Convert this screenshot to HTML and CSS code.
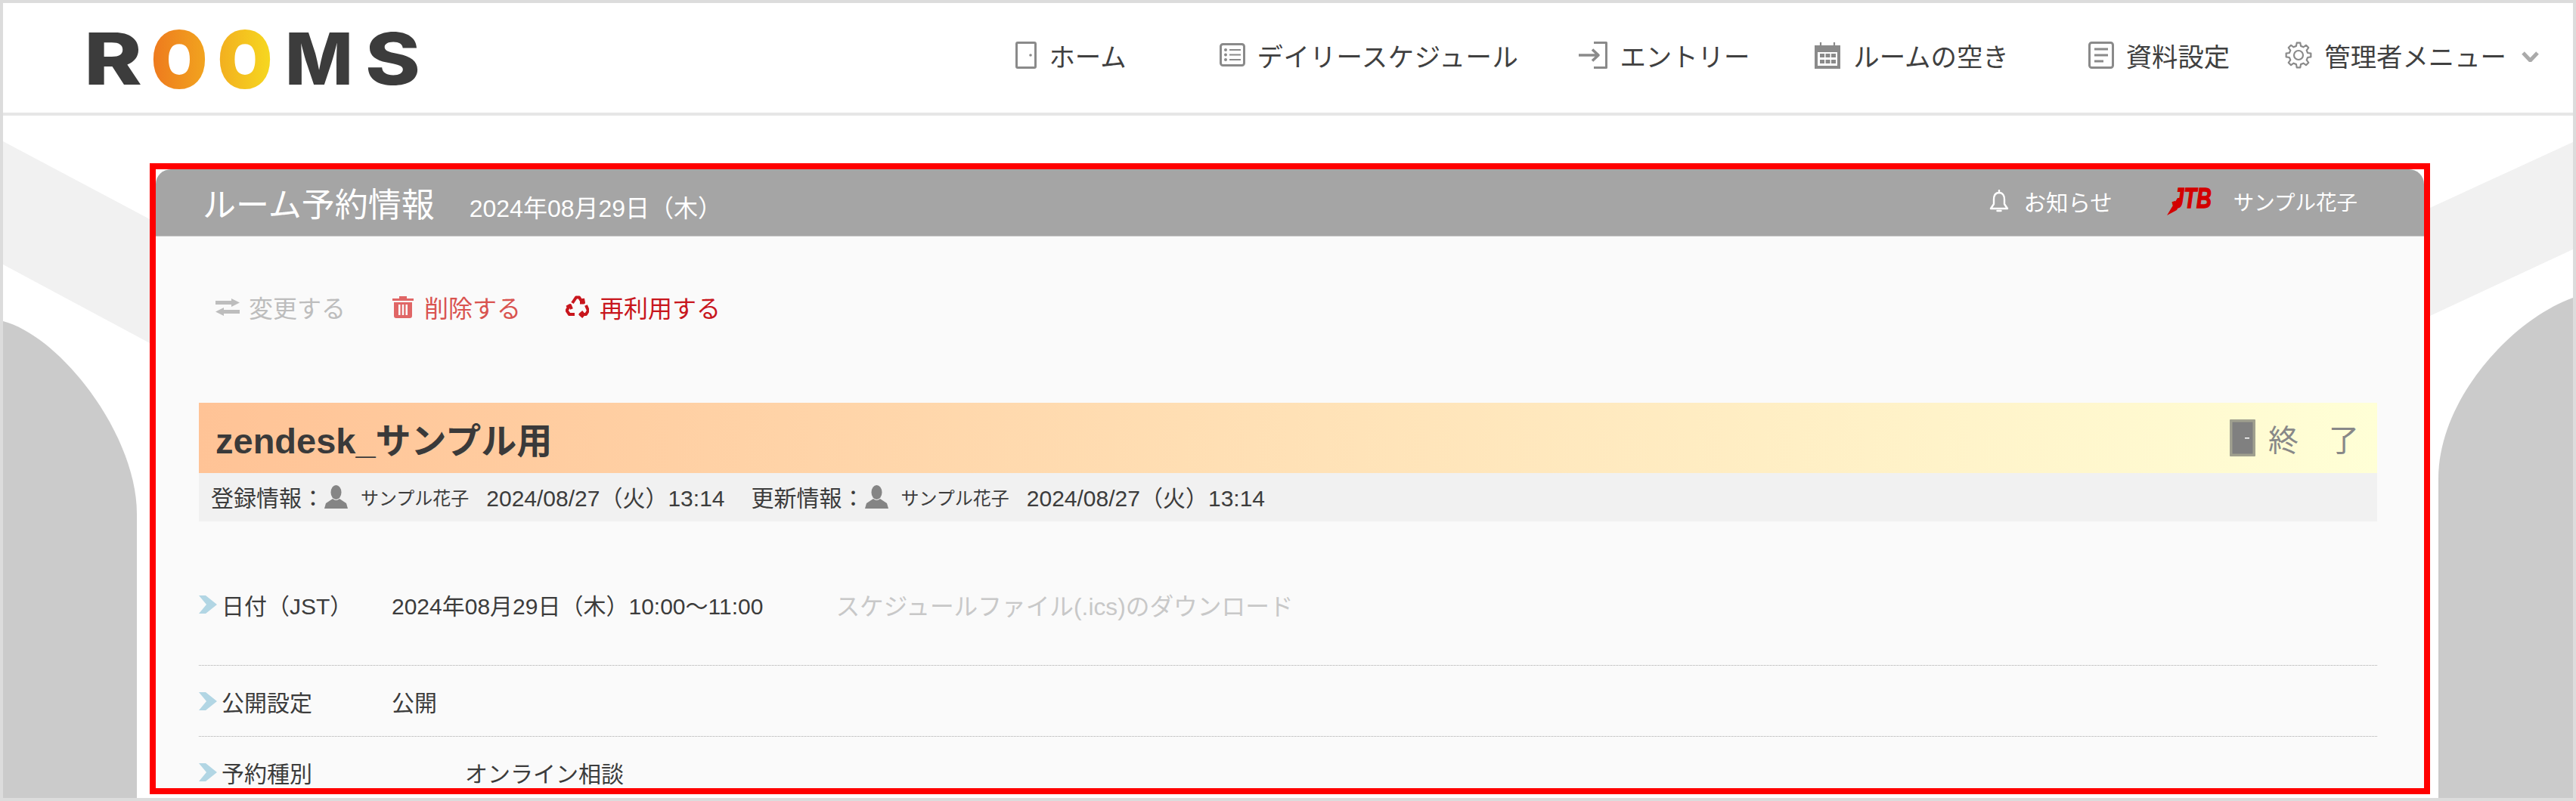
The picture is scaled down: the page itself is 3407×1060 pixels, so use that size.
FILE: index.html
```html
<!DOCTYPE html>
<html lang="ja">
<head>
<meta charset="utf-8">
<title>ルーム予約情報</title>
<link rel="stylesheet" href="styles.css">
</head>
<body>
<div class="frame">
  <svg class="backdrop" width="3399" height="1052" viewBox="4 4 3399 1052" aria-hidden="true">
    <polygon class="band" points="4,187 198,290 198,454 4,350"/>
    <polygon class="band" points="3403,188 3214,275 3214,418 3403,330"/>
    <path class="hill" d="M4 425 C80 445 181 575 181 680 V1056 H4 Z"/>
    <path class="hill" d="M3403 394 C3320 424 3225 530 3225 633 V1056 H3403 Z"/>
  </svg>

  <header class="site-header">
    <svg class="logo" width="443" height="130" viewBox="0 -26 443 130" role="img" aria-label="ROOMS">
      <defs>
        <linearGradient id="logoGrad" gradientUnits="userSpaceOnUse" x1="90" y1="0" x2="246" y2="0">
          <stop offset="0" stop-color="#ee7a1e"/>
          <stop offset="1" stop-color="#f6d820"/>
        </linearGradient>
      </defs>
      <text class="logo-text" x="-1" y="72" textLength="77" lengthAdjust="spacingAndGlyphs">R</text>
      <text class="logo-text logo-o" x="89" y="75" textLength="72" lengthAdjust="spacingAndGlyphs">O</text>
      <text class="logo-text logo-o" x="177" y="75" textLength="70" lengthAdjust="spacingAndGlyphs">O</text>
      <text class="logo-text" x="265" y="72" textLength="90" lengthAdjust="spacingAndGlyphs">M</text>
      <text class="logo-text" x="371" y="72" textLength="73" lengthAdjust="spacingAndGlyphs">S</text>
    </svg>
    <nav class="nav">
      <a class="nav-item nav-home">
        <svg width="28" height="36" viewBox="0 0 28 36"><rect class="ico" x="1.5" y="1.5" width="25" height="33" rx="1.5"/><circle class="ico-fill" cx="20" cy="18" r="1.8"/></svg>
        <span>ホーム</span>
      </a>
      <a class="nav-item nav-daily">
        <svg width="34" height="31" viewBox="0 0 34 31"><rect class="ico" x="1.5" y="1.5" width="31" height="28" rx="3"/><path class="ico ico-thin" d="M13 9H28M13 15.500H28M13 22H28"/><circle class="ico-fill" cx="8" cy="9" r="2"/><circle class="ico-fill" cx="8" cy="15.500" r="2"/><circle class="ico-fill" cx="8" cy="22" r="2"/></svg>
        <span>デイリースケジュール</span>
      </a>
      <a class="nav-item nav-entry">
        <svg width="38" height="36" viewBox="0 0 38 36"><path class="ico" d="M20 1.500H36.500V34.500H20"/><path class="ico ico-bold" d="M0 18H25M18 10.500L26 18L18 25.500"/></svg>
        <span>エントリー</span>
      </a>
      <a class="nav-item nav-room">
        <svg width="36" height="36" viewBox="0 0 36 36"><path class="ico-fill" d="M1 5H35V36H1ZM5 14V32H31V14Z"/><path class="ico ico-thin" d="M9 1V8M27 1V8"/><path class="ico-fill" d="M8 16H14V21H8ZM15.500 16H21.500V21H15.500ZM23 16H29V21H23ZM8 24H14V29H8ZM15.500 24H21.500V29H15.500ZM23 24H29V29H23Z"/></svg>
        <span>ルームの空き</span>
      </a>
      <a class="nav-item nav-docs">
        <svg width="34" height="36" viewBox="0 0 34 36"><rect class="ico" x="1.500" y="1.500" width="31" height="33" rx="3"/><path class="ico" d="M8 10H26M8 18H26M8 26H20"/></svg>
        <span>資料設定</span>
      </a>
      <a class="nav-item nav-admin">
        <svg width="36" height="36" viewBox="0 0 36 36"><polygon class="ico ico-thin" points="15.7,1.66 20.3,1.66 21.03,5.87 24.44,7.29 27.93,4.82 31.18,8.07 28.71,11.56 30.13,14.97 34.34,15.7 34.34,20.3 30.13,21.03 28.71,24.44 31.18,27.93 27.93,31.18 24.44,28.71 21.03,30.13 20.3,34.34 15.7,34.34 14.97,30.13 11.56,28.71 8.07,31.18 4.82,27.93 7.29,24.44 5.87,21.03 1.66,20.3 1.66,15.7 5.87,14.97 7.29,11.56 4.82,8.07 8.07,4.82 11.56,7.29 14.97,5.87"/><circle class="ico ico-thin" cx="18" cy="18" r="6"/></svg>
        <span>管理者メニュー</span>
        <svg class="caret" width="23" height="14" viewBox="0 0 23 14"><path d="M2 2L11.500 12L21 2"/></svg>
      </a>
    </nav>
  </header>

  <main class="stage">
    <section class="highlight">
      <div class="panel-head">
        <div class="head-left">
          <h1 class="panel-title">ルーム予約情報</h1>
          <span class="panel-date">2024年08月29日（木）</span>
        </div>
        <div class="head-right">
          <a class="head-link">
            <svg width="26" height="31" viewBox="0 0 26 31"><path class="ico-white" d="M13 4C8 4 6 8 6 13V19L2 25H24L20 19V13C20 8 18 4 13 4Z"/><path class="ico-white" d="M13 1V4M10.500 28H15.500"/></svg>
            <span class="head-notice">お知らせ</span>
          </a>
          <span class="head-user">
            <svg class="jtb" width="84" height="53" viewBox="0 -8 84 53" role="img" aria-label="JTB"><path class="jtb-tail" d="M14 14L21 14L13 30L0 37L6 27Z"/><text class="jtb-text" x="7" y="27" textLength="52" lengthAdjust="spacingAndGlyphs">JTB</text></svg>
            <span>サンプル花子</span>
          </span>
        </div>
      </div>

      <div class="panel-body">
        <div class="actions">
          <a class="action action-off">
            <svg width="32" height="23" viewBox="0 0 32 23"><path class="swap" d="M0 3H21V0L32 5.500L21 11V8H0ZM32 15H11V12L0 17.500L11 23V20H32Z"/></svg>
            <span>変更する</span>
          </a>
          <a class="action action-delete">
            <svg width="28" height="30" viewBox="0 0 28 30"><path class="trash" d="M0 4H9V1H19V4H28V7H0ZM2 9H26V27Q26 30 23 30H5Q2 30 2 27ZM8 12V26H10.500V12ZM12.800 12V26H15.200V12ZM17.500 12V26H20V12Z"/></svg>
            <span>削除する</span>
          </a>
          <a class="action action-reuse">
            <svg width="31" height="30" viewBox="0 0 31 30"><g class="recycle"><path d="M9 10L14 2.500H18L22 9"/><path d="M19 9.500H24L23 4"/><path d="M27 13L30 20L27 25H20"/><path d="M23.500 21.500L19.500 25L23.500 28.500"/><path d="M12 25H5L1.500 20L5 14"/><path d="M1.500 15.500L6 13L8 18"/></g></svg>
            <span>再利用する</span>
          </a>
        </div>

        <div class="banner">
          <h2 class="banner-title">zendesk_サンプル用</h2>
          <div class="banner-status">
            <svg width="34" height="49" viewBox="0 0 34 49"><rect class="door-out" width="34" height="49" rx="1"/><rect class="door-in" x="3.500" y="3.500" width="27" height="42"/><rect class="door-knob" x="20" y="24" width="6" height="1.500"/></svg>
            <span>終　了</span>
          </div>
        </div>

        <div class="meta">
          <span class="meta-label">登録情報：</span>
          <svg class="person" width="31" height="31" viewBox="0 0 31 31"><ellipse class="person-fill" cx="15.500" cy="9.500" rx="7" ry="9.500"/><path class="person-fill" d="M11 18Q15.500 22 20 18L29 24L31 31H0L2 24Z"/></svg>
          <span class="meta-name">サンプル花子</span>
          <span class="meta-date">2024/08/27（火）13:14</span>
          <span class="meta-label meta-second">更新情報：</span>
          <svg class="person" width="31" height="31" viewBox="0 0 31 31"><ellipse class="person-fill" cx="15.500" cy="9.500" rx="7" ry="9.500"/><path class="person-fill" d="M11 18Q15.500 22 20 18L29 24L31 31H0L2 24Z"/></svg>
          <span class="meta-name">サンプル花子</span>
          <span class="meta-date">2024/08/27（火）13:14</span>
        </div>

        <div class="row row-first">
          <span class="row-label"><svg width="24" height="24" viewBox="0 0 24 24"><path class="chev" d="M0 0H9L24 12L9 24H0L10 12Z"/></svg>日付（JST）</span>
          <span class="row-value">2024年08月29日（木）10:00～11:00</span>
          <a class="row-link">スケジュールファイル(.ics)のダウンロード</a>
        </div>
        <div class="row">
          <span class="row-label"><svg width="24" height="24" viewBox="0 0 24 24"><path class="chev" d="M0 0H9L24 12L9 24H0L10 12Z"/></svg>公開設定</span>
          <span class="row-value">公開</span>
        </div>
        <div class="row row-last">
          <span class="row-label row-label-wide"><svg width="24" height="24" viewBox="0 0 24 24"><path class="chev" d="M0 0H9L24 12L9 24H0L10 12Z"/></svg>予約種別</span>
          <span class="row-value">オンライン相談</span>
        </div>
      </div>
    </section>
  </main>
</div>
</body>
</html>
```

FILE: styles.css
```css
* { box-sizing: border-box; }
html, body { margin: 0; padding: 0; }
body {
  background: #fff;
  color: #3c3c3c;
  font-family: "Liberation Sans", "Noto Sans CJK JP", sans-serif;
  font-weight: 400;
}
h1, h2 { margin: 0; font-weight: inherit; font-size: inherit; }
svg { display: block; flex: none; }

.frame {
  position: relative;
  width: 3407px;
  height: 1060px;
  overflow: hidden;
  border: 4px solid #dcdcdc;
}
.backdrop { position: absolute; left: 0; top: 0; }
.band { fill: #f1f1f1; }
.hill { fill: #cbcbcb; }

/* header */
.site-header {
  position: relative;
  height: 149px;
  border-bottom: 4px solid #e6e6e6;
  background: #fff;
  display: flex;
  align-items: center;
  justify-content: space-between;
  padding: 0 45px 4px 108px;
}
.logo { margin-top: 9px; }
.logo-text {
  font-family: Inter, "Liberation Sans", sans-serif;
  font-weight: 800;
  font-size: 95px;
  fill: #3c3c3c;
}
.logo-text.logo-o {
  fill: url(#logoGrad);
  stroke: url(#logoGrad);
  stroke-width: 4;
  font-size: 100px;
}

.nav { display: flex; align-items: center; font-size: 34.400px; color: #404040; margin-bottom: 4px; }
.nav-item { display: flex; align-items: center; gap: 16px; white-space: nowrap; }
.nav-home { margin-right: 123px; }
.nav-daily { margin-right: 80px; letter-spacing: 0.6px; }
.nav-entry { margin-right: 85px; }
.nav-room { margin-right: 105px; }
.nav-docs { margin-right: 73px; }
.caret { margin-left: 4px; margin-top: 4px; }
.caret path { fill: none; stroke: #aaa; stroke-width: 5; }
.ico { fill: none; stroke: #8a8a8a; stroke-width: 3; stroke-linejoin: round; }
.ico-thin { stroke-width: 2.2; }
.ico-bold { stroke-width: 3.6; }
.ico-fill { fill: #8a8a8a; }
.ico-white { fill: none; stroke: #fff; stroke-width: 2.4; stroke-linejoin: round; stroke-linecap: round; }

/* main box */
.stage {
  position: relative;
  padding: 63px 0 0 194px;
}
.highlight {
  width: 3016px;
  height: 835px;
  border: 8px solid #f00;
  background: #fff;
  overflow: hidden;
}
.panel-head {
  height: 89px;
  background: #a5a5a5;
  border-bottom: 1px solid #c8c8c8;
  border-radius: 20px 20px 0 0;
  display: flex;
  align-items: center;
  justify-content: space-between;
  padding: 0 88px 0 62px;
  color: #fff;
}
.head-left { display: flex; align-items: baseline; gap: 46px; }
.panel-title { font-size: 44px; }
.panel-date { font-size: 32px; }
.head-right { display: flex; align-items: center; font-size: 27.500px; margin-top: -4px; }
.head-notice { font-size: 29.500px; }
.head-link { display: flex; align-items: center; gap: 19px; margin-right: 72px; }
.head-user { display: flex; align-items: center; gap: 4px; }
.jtb-tail { fill: #d30000; }
.jtb-text {
  font-family: "Liberation Sans", sans-serif;
  font-style: italic;
  font-weight: 700;
  font-size: 36px;
  fill: #d30000;
  stroke: #d30000;
  stroke-width: 1.4;
}

.panel-body {
  height: 800px;
  background: #fafafa;
  padding: 71px 62px 0 57px;
}
.actions {
  display: flex;
  align-items: center;
  height: 44px;
  padding-left: 22px;
  font-size: 32px;
}
.action { display: flex; align-items: center; gap: 12px; }
.action-off { color: #bdbdbd; margin-right: 62px; }
.action-delete { color: #d9534f; gap: 14px; margin-right: 59px; }
.action-reuse { color: #c8161d; gap: 14px; }
.swap { fill: #bdbdbd; }
.trash { fill: #e06666; fill-rule: evenodd; }
.recycle path { fill: none; stroke: #c8161d; stroke-width: 4; stroke-linejoin: round; }

.banner {
  margin-top: 105px;
  height: 93px;
  background: linear-gradient(90deg, #ffc396 0%, #ffffd6 100%);
  display: flex;
  align-items: center;
  justify-content: space-between;
  padding: 0 24px 0 22px;
}
.banner-title { font-size: 47px; font-weight: 700; color: #3a3a3a; }
.banner-status { display: flex; align-items: center; gap: 17px; font-size: 40px; color: #888; }
.door-out { fill: #a0a08f; }
.door-in { fill: #808080; }
.door-knob { fill: #fff; }

.meta {
  height: 64px;
  background: #f1f1f1;
  display: flex;
  align-items: center;
  padding: 0 0 2px 16px;
  font-size: 30px;
  white-space: nowrap;
}
.person-fill { fill: #858585; }
.meta-name { font-size: 24px; margin: 0 23px 0 17px; }
.meta-second { margin-left: 35px; }

.row {
  height: 94px;
  display: flex;
  align-items: center;
  font-size: 30px;
  border-bottom: 1px dotted #aaa;
}
.row-first { height: 191px; padding-top: 90px; padding-bottom: 61px; }
.row-last { border-bottom: 0; }
.row-label { display: flex; align-items: center; gap: 6px; width: 255px; }
.row-label-wide { width: 352px; }
.row-link { margin-left: 96px; color: #c8c8c8; font-size: 31.700px; }
.chev { fill: #b2d6e4; }
```
